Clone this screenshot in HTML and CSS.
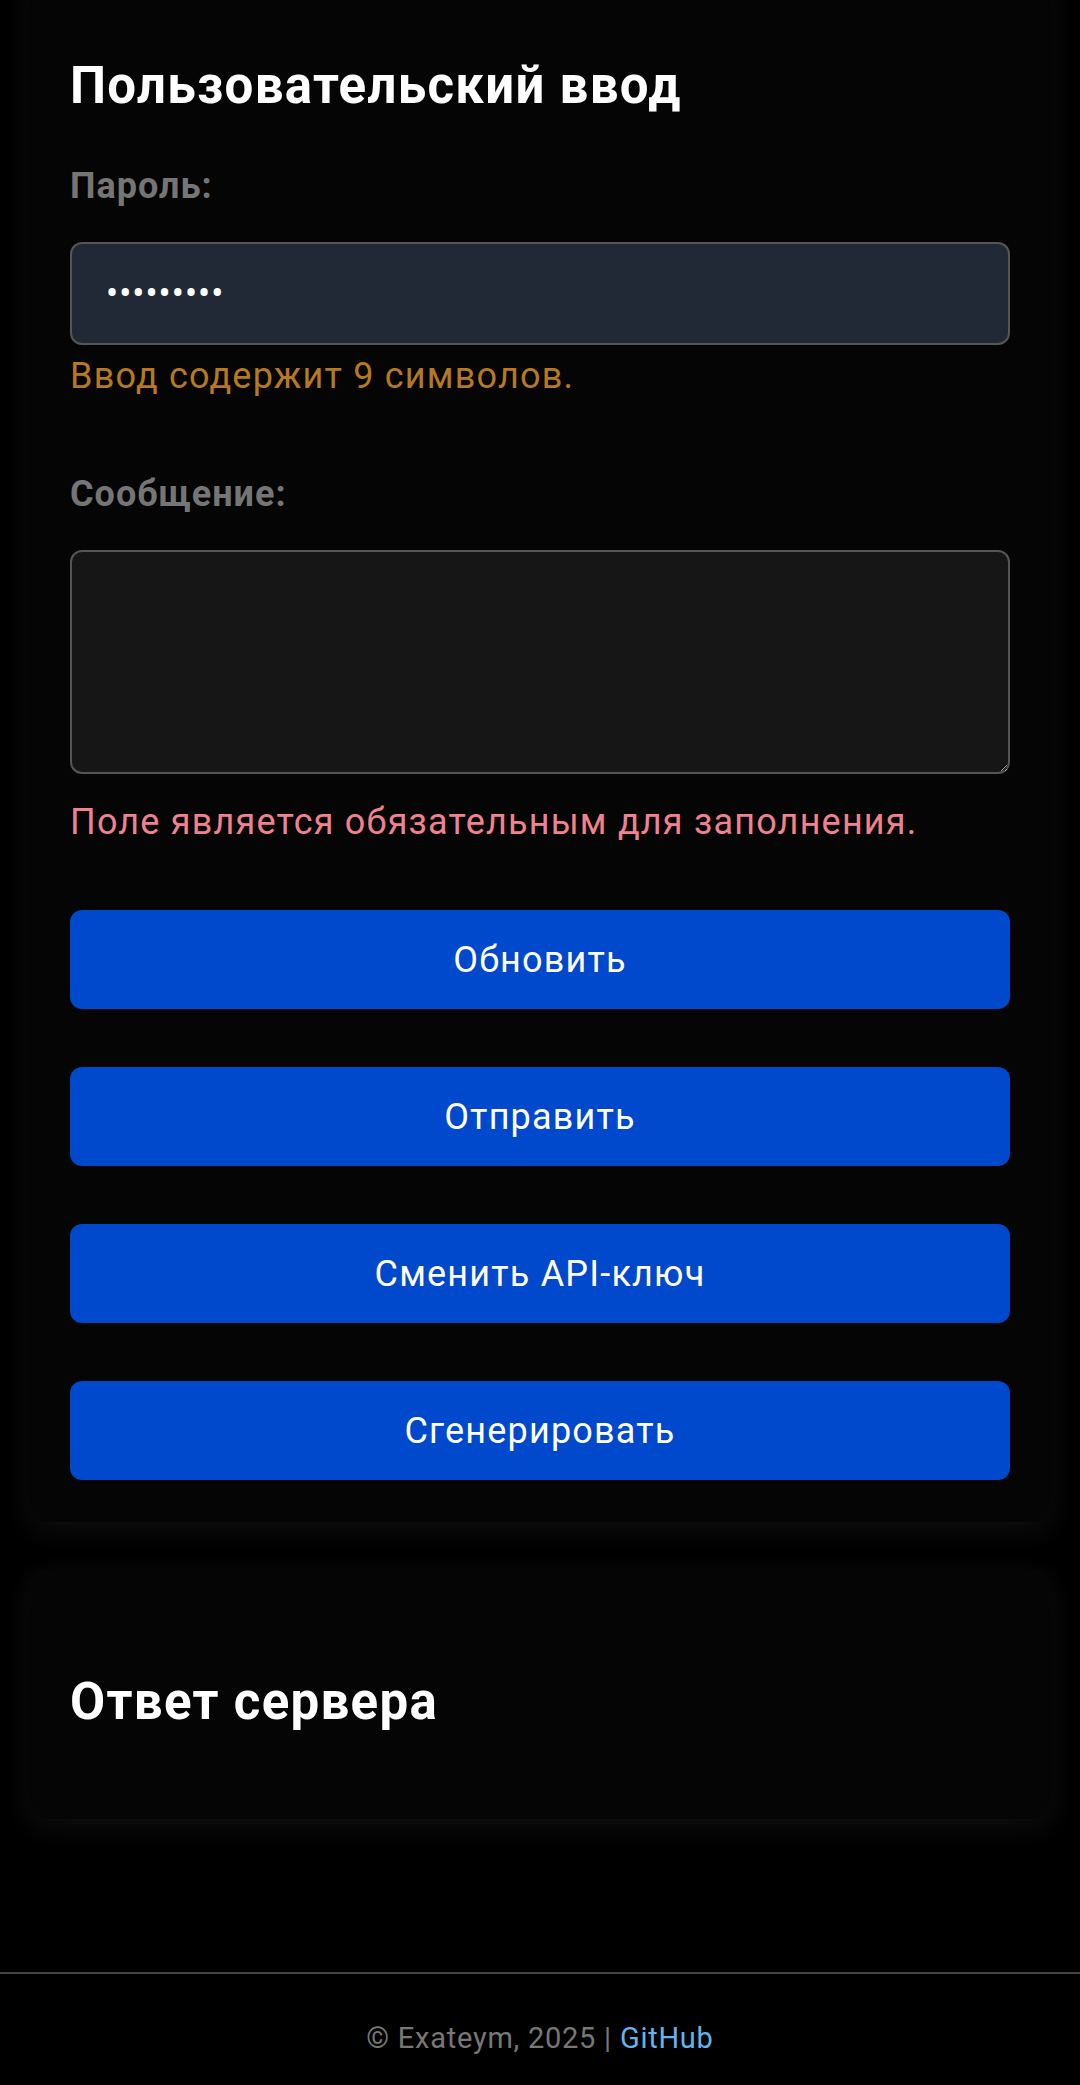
FILE: index.html
```html
<!DOCTYPE html>
<html lang="ru">
<head>
<meta charset="utf-8">
<title>Пользовательский ввод</title>
<link rel="stylesheet" href="styles.css">
</head>
<body>
<main class="page">
  <section class="card card-input">
    <h2 class="card-title">Пользовательский ввод</h2>
    <div class="field">
      <label class="field-label" for="pwd">Пароль:</label>
      <input class="text-input" id="pwd" type="password" value="123456789">
      <p class="hint hint-warn">Ввод содержит 9 символов.</p>
    </div>
    <div class="field">
      <label class="field-label" for="msg">Сообщение:</label>
      <textarea class="text-area" id="msg"></textarea>
      <p class="hint hint-error">Поле является обязательным для заполнения.</p>
    </div>
    <div class="actions">
      <button class="btn" type="button">Обновить</button>
      <button class="btn" type="button">Отправить</button>
      <button class="btn" type="button">Сменить API-ключ</button>
      <button class="btn" type="button">Сгенерировать</button>
    </div>
  </section>
  <section class="card card-response">
    <h2 class="card-title response-title">Ответ сервера</h2>
  </section>
</main>
<footer class="footer">
  <p class="footer-text">© Exateym, 2025 | <a class="footer-link" href="#">GitHub</a></p>
</footer>
</body>
</html>
```
FILE: styles.css
```css
* { box-sizing: border-box; }
html, body { margin: 0; padding: 0; }
body {
  background: #000;
  color: #fff;
  font-family: Roboto, "Noto Sans", "Liberation Sans", sans-serif;
  overflow: hidden;
}
.page {
  padding: 0 28px;
  display: flex;
  flex-direction: column;
  gap: 47px;
}
.card {
  background: #050505;
  border-radius: 18px;
  padding: 42px;
  box-shadow: 0 8px 28px rgba(255, 255, 255, 0.06);
}
.card-input {
  margin-top: -40px;
}
.card-title {
  margin: 0;
  font-size: 51px;
  font-weight: 700;
  line-height: 58px;
  letter-spacing: 1.3px;
  color: #fff;
}
.card-input .card-title { margin-top: 55px; }
.field { display: flex; flex-direction: column; }
.field-label {
  font-size: 36px;
  font-weight: 700;
  color: #757575;
  line-height: 40px;
  letter-spacing: 1px;
  margin-top: 51px;
  margin-bottom: 36px;
}
.field + .field .field-label { margin-top: 78px; }
.text-input, .text-area {
  width: 100%;
  font-family: inherit;
  font-size: 36px;
  color: #fff;
  border: 2px solid #555;
  border-radius: 12px;
  padding: 0 34px;
  outline: none;
}
.text-input {
  height: 103px;
  background: #222936;
  letter-spacing: 1px;
}
.text-area {
  height: 224px;
  background: #161616;
  display: block;
}
.hint {
  margin: 11px 0 0;
  font-size: 36px;
  line-height: 40px;
  letter-spacing: 1.2px;
}
.hint-warn { color: #b7791f; }
.hint-error { color: #f0828f; margin-top: 28px; }
.actions {
  display: flex;
  flex-direction: column;
  gap: 58px;
  margin-top: 68px;
}
.btn {
  height: 99px;
  width: 100%;
  border: none;
  border-radius: 12px;
  background: #0048cc;
  color: #fff;
  font-family: inherit;
  font-size: 36px;
  letter-spacing: 1.2px;
}
.card-response {
  height: 250px;
  padding-top: 104px;
}
.footer {
  margin-top: 153px;
  border-top: 2px solid #444;
  padding: 47px 0 30px;
  text-align: center;
}
.footer-text {
  margin: 0;
  font-size: 29px;
  letter-spacing: 0.75px;
  color: #777;
}
.footer-link {
  color: #63b3ed;
  text-decoration: none;
}
```
